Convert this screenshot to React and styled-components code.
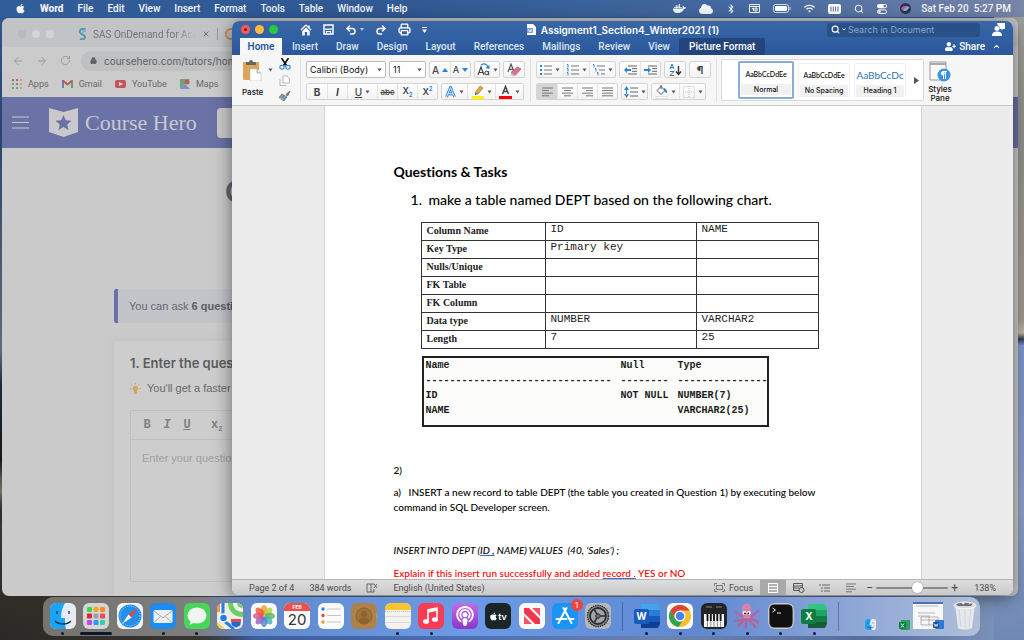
import React from "react";
import styled, { createGlobalStyle, css } from "styled-components";
import { FaApple, FaDocker, FaCloud, FaBluetoothB, FaWifi, FaPodcast, FaUserPlus } from "react-icons/fa";
import { Search, Undo2, Redo2, Printer, ArrowLeft, ArrowRight, RotateCw, Lock, X, ChevronUp } from "lucide-react";

const ui = `Inter, "Liberation Sans", sans-serif`;
const chrome = `Roboto, "Liberation Sans", sans-serif`;
const web = `"Liberation Sans", sans-serif`;
const calibri = `Lato, "Liberation Sans", sans-serif`;

const Global = createGlobalStyle`
  * { box-sizing: border-box; }
  body { margin: 0; font-family: ${ui}; }
  button, input, select, textarea { font: inherit; color: inherit; margin: 0; padding: 0; border: 0; background: none; outline: none; }
  p, h1, h2, h3 { margin: 0; }
  a { color: inherit; text-decoration: none; }
  svg { display: block; flex: none; }
`;

/* ---------- desktop ---------- */
const Desktop = styled.div`
  position: relative;
  height: 100vh;
  overflow: hidden;
  background:
    radial-gradient(ellipse at 0% 100%, #2b2926 0, #39352f 180px, transparent 260px),
    linear-gradient(#a3a19c 0, #8f8e8c 20%, #a09a90 50%, #c0b7a8 52%, #313c58 53%, #7c96cd 54%, #8197c5 64%, #8aa0c8 80%, #6f88b4 100%) right / 30px 100% no-repeat,
    linear-gradient(90deg, #2c2b2a 0, #383530 18%, #3d5e9c 24%, #4c6fb0 45%, #6b82ae 65%, #566e9e 85%, #8298bd 100%) bottom / 100% 60px no-repeat,
    linear-gradient(#30599b 0, #29446f 20%, #5f6a75 55%, #1d2a38 60%, #141a1e 72%, #8b8577 77%, #1b1f20 80%);
`;

const MenuBar = styled.nav`
  display: flex;
  align-items: center;
  gap: 14px;
  height: 17px;
  padding: 0 13px 0 15px;
  background: linear-gradient(90deg, #315d99, #315994 40%, #476ba2 75%, #7886a8);
  color: #f3f6fa;
  font: 500 10px/16px ${chrome};
`;
const MenuItem = styled.button`
  font-weight: ${(p) => (p.$strong ? 800 : 500)};
`;
const StatusTray = styled.div`
  display: flex;
  align-items: center;
  gap: 13px;
  margin-left: auto;
`;
const Clock = styled.time`
  margin-left: -3px;
  white-space: pre;
`;

/* ---------- browser window ---------- */
const BrowserWindow = styled.section`
  position: absolute;
  inset: 18px 6px 44px 2px;
  display: flex;
  flex-direction: column;
  overflow: hidden;
  border-radius: 7px;
  background: #cacaca;
  color: #66686b;
`;
const TabStrip = styled.div`
  display: flex;
  align-items: center;
  height: 29px;
  padding: 3px 0 0 16px;
  background: #c1c3c4;
  font: 10px ${chrome};
`;
const Lights = styled.div`
  display: flex;
  gap: ${(p) => p.$gap}px;
`;
const Light = styled.button`
  display: grid;
  place-items: center;
  width: ${(p) => p.$size}px;
  height: ${(p) => p.$size}px;
  border-radius: 50%;
  background: ${(p) => p.$color};
  &::after {
    content: "";
    width: 3px;
    height: 3px;
    border-radius: 50%;
    background: ${(p) => (p.$edited ? "#7d1210" : "transparent")};
  }
`;
const BrowserTab = styled.div`
  display: flex;
  align-items: center;
  gap: 6px;
  width: 140px;
  margin-left: 24px;
  border-right: 1px solid #96989a;
`;
const TabTitle = styled.span`
  flex: none;
  width: 103px;
  white-space: nowrap;
  color: #727476;
  mask-image: linear-gradient(90deg, #000 80%, transparent);
`;
const OrangeMark = styled.span`
  width: 12px;
  height: 12px;
  margin-left: 7px;
  border: 2px solid #c98755;
  border-radius: 50%;
`;
const AddressRow = styled.form`
  display: flex;
  align-items: center;
  gap: 12px;
  height: 27px;
  padding: 0 10px;
  background: #cbcbcb;
  color: #97999b;
`;
const AddressField = styled.label`
  display: flex;
  flex: 1;
  align-items: center;
  gap: 7px;
  height: 20px;
  margin-left: -2px;
  padding-left: 9px;
  border-radius: 10px;
  background: #bec0c1;
  color: #606263;
  input { flex: 1; font: 10px ${ui}; }
`;
const Bookmarks = styled.div`
  display: flex;
  align-items: center;
  gap: 13px;
  height: 23px;
  padding: 0 10px 4px;
  background: #cbcbcb;
  font: 9px ${chrome};
`;
const Bookmark = styled.a`
  display: flex;
  align-items: center;
  gap: 6px;
`;
const HeroBar = styled.header`
  display: flex;
  align-items: center;
  gap: 20px;
  height: 51px;
  padding: 0 11px 0 10px;
  background: #6a72a6;
  color: #c9c9ce;
`;
const Logo = styled.a`
  display: flex;
  align-items: center;
  gap: 7px;
  font: 22px "Liberation Serif", serif;
`;
const HeroSearch = styled.input`
  flex: 1;
  height: 30px;
  border-radius: 4px;
  background: #c9c9cb;
`;
const HeroPage = styled.main`
  display: flex;
  flex: 1;
  flex-direction: column;
  min-height: 0;
  padding: 27px 112px 0;
  font-family: ${web};
`;
const HeroTitle = styled.h1`
  height: 34px;
  padding-left: 111px;
  color: #66666a;
  font: 700 28px/34px ${ui};
`;
const Notice = styled.p`
  height: 34px;
  margin-top: 80px;
  padding-left: 11px;
  border-left: 4px solid #6971a8;
  border-radius: 2px;
  background: #c2c4c9;
  font-size: 11px;
  line-height: 34px;
  b { font-weight: 700; color: #5d5f63; }
`;
const QuestionCard = styled.div`
  display: flex;
  flex: 1;
  flex-direction: column;
  margin-top: 18px;
  padding: 12px 16px 14px;
  background: #cdcdcd;
  box-shadow: 0 0 6px #bebebe;
`;
const CardTitle = styled.h2`
  color: #5b5c5e;
  font: 600 13px/20px ${ui};
`;
const Tip = styled.p`
  display: flex;
  align-items: center;
  gap: 6px;
  height: 30px;
  font-size: 11px;
`;
const Editor = styled.div`
  display: flex;
  flex: 1;
  flex-direction: column;
  margin-top: 7px;
  border: 1px solid #c0c0c0;
  textarea {
    flex: 1;
    padding: 12px 11px;
    resize: none;
    font-size: 11px;
    &::placeholder { color: #9fa0a1; opacity: 1; }
  }
`;
const EditorTools = styled.div`
  display: flex;
  gap: 12px;
  height: 29px;
  padding: 0 12px;
  border-bottom: 1px solid #c0c0c0;
  color: #808182;
  font: 12px/28px "Liberation Mono", monospace;
  button { min-width: 8px; font-weight: 700; }
  button:last-child { margin-left: 8px; }
  sub { font-size: 7px; }
`;

/* ---------- word window ---------- */
const WordWindow = styled.section`
  position: absolute;
  inset: 21px 11px 45px 232px;
  display: flex;
  flex-direction: column;
  overflow: hidden;
  border-radius: 7px;
  background: #ebebeb;
`;
const WordShadow = styled.div`
  position: absolute;
  inset: 21px 11px 45px 232px;
  border-radius: 7px;
  box-shadow: 0 3px 18px rgba(0, 0, 0, 0.5);
`;
const TitleBar = styled.header`
  display: grid;
  grid-template-columns: 1fr auto 1fr;
  align-items: center;
  height: 17px;
  padding: 0 8px 0 9px;
  background: linear-gradient(#3a66a6, #3160a3);
  color: #fff;
`;
const QuickTools = styled.div`
  display: flex;
  align-items: center;
  gap: 11px;
  button { display: flex; align-items: center; gap: 3px; }
`;
const TitleLeft = styled.div`
  display: flex;
  align-items: center;
  gap: 22px;
`;
const TitleRight = styled.div`
  display: flex;
  align-items: center;
  justify-content: flex-end;
  gap: 12px;
`;
const DocTitle = styled.h1`
  display: flex;
  align-items: center;
  gap: 5px;
  font-size: 10px;
  font-weight: 600;
  line-height: 16px;
`;
const SearchField = styled.label`
  display: flex;
  align-items: center;
  gap: 2px;
  width: 153px;
  height: 14px;
  padding-left: 4px;
  border-radius: 3px;
  background: #2a5089;
  input { width: 120px; font-size: 9px; }
  input::placeholder { color: #8aa4cb; opacity: 1; }
`;
const TabsRow = styled.div`
  display: flex;
  align-items: center;
  height: 17px;
  padding: 0 12px 0 8px;
  background: linear-gradient(#3160a3, #2b579a);
  color: #dbe5f3;
  font: 500 10px ${chrome};
`;
const RibbonTab = styled.button`
  height: 17px;
  padding: 0 9px;
  ${(p) => p.$active && css`width: 42px; margin-right: 1px; padding: 0; background: #f7f7f7; color: #2b579a; font-weight: 600;`}
  ${(p) => p.$context && css`padding: 0 10px; border-radius: 2px 2px 0 0; background: #23457c; color: #fff;`}
`;
const Share = styled.button`
  display: flex;
  align-items: center;
  gap: 3px;
  margin: 0 7px 0 auto;
  color: #fff;
`;
const Ribbon = styled.div`
  display: flex;
  height: 51px;
  background: #f6f6f6;
  border-bottom: 1px solid #c8c8c8;
  color: #111;
`;
const RibbonGroup = styled.div`
  display: flex;
  flex-direction: column;
  gap: 5px;
  margin: 3px 0;
  padding: 3px 5px 0;
  border-right: 1px solid #dfdfdf;
`;
const ClipboardGroup = styled.div`
  display: flex;
  gap: 6px;
  width: 69px;
  margin: 3px 0;
  padding: 0 0 0 10px;
  border-right: 1px solid #dfdfdf;
`;
const PasteButton = styled.button`
  display: grid;
  grid-template-columns: auto auto;
  align-items: center;
  justify-items: center;
  gap: 3px 5px;
  height: 40px;
  font-size: 8px;
  font-weight: 500;
  line-height: 10px;
`;
const SmallStack = styled.div`
  display: flex;
  flex-direction: column;
  gap: 5px;
`;
const ToolRow = styled.div`
  display: flex;
  gap: 3px;
`;
const ButtonGroup = styled.div`
  display: flex;
  height: 17px;
  border: 1px solid #d4d4d4;
  border-radius: 2px;
  background: linear-gradient(#fff, #f3f3f3);
`;
const ToolButton = styled.button`
  display: flex;
  align-items: center;
  justify-content: center;
  gap: 3px;
  width: ${(p) => p.$w || 20}px;
  color: #444;
  font: ${(p) => p.$font || "700 10px"} ${ui};
  background: ${(p) => (p.$on ? "#d5d5d5" : "transparent")};
  & + & { border-left: 1px solid #e4e4e4; }
  sub, sup { color: #2b83d4; font-size: 6px; line-height: 6px; }
`;
const Combo = styled.div`
  display: flex;
  align-items: center;
  width: ${(p) => p.$w}px;
  height: 17px;
  padding: 0 3px;
  border: 1px solid #bdbdbd;
  border-radius: 2px;
  background: #fff;
  select { flex: 1; min-width: 0; appearance: none; font-size: 9px; line-height: 14px; }
`;
const Gallery = styled.div`
  display: flex;
  align-items: center;
  gap: 4px;
  height: 42px;
  margin: 4px 0 0 4px;
  padding: 0 4px 0 16px;
  border: 1px solid #dadada;
  border-radius: 2px;
  background: #fff;
`;
const StyleCard = styled.button`
  display: flex;
  flex-direction: column;
  width: ${(p) => (p.$on ? 56 : 52)}px;
  height: ${(p) => (p.$on ? 38 : 34)}px;
  padding: 1px;
  border: ${(p) => (p.$on ? "2px solid #8aaedb" : "1px solid #efefef")};
  border-radius: 2px;
`;
const StyleSample = styled.span`
  width: 100%;
  height: 20px;
  color: ${(p) => (p.$heading ? "#2e74b5" : "#000")};
  font: ${(p) => (p.$heading ? "10px" : "500 7px")}/20px ${calibri};
  white-space: nowrap;
`;
const StyleName = styled.span`
  width: 100%;
  background: #f1f1f1;
  font-size: 7px;
  font-weight: 500;
  line-height: 11px;
`;
const StylesPane = styled.button`
  display: flex;
  flex-direction: column;
  align-items: center;
  gap: 2px;
  width: 32px;
  padding-top: 6px;
  font-size: 8px;
  font-weight: 500;
  line-height: 9px;
`;

/* ---------- document ---------- */
const Canvas = styled.div`
  flex: 1;
  min-height: 0;
  overflow: hidden;
`;
const Page = styled.article`
  max-width: 598px;
  height: 100%;
  margin: 0 auto;
  padding: 56px 70px 0 69px;
  border: solid #d4d4d4;
  border-width: 0 1px;
  background: #fff;
  color: #000;
  font: 500 10px/15px ${calibri};
  font-variant-ligatures: none;
  overflow: hidden;
`;
const Heading = styled.h2`
  font-size: 14px;
  font-weight: 700;
  line-height: 20px;
`;
const Task = styled.ol`
  margin: 8px 0 12px;
  padding-left: 32px;
  font-size: 14px;
  line-height: 20px;
  white-space: nowrap;
  li { padding-left: 3px; }
`;
const ChartTable = styled.table`
  width: 398px;
  margin-left: 27px;
  border-collapse: collapse;
  table-layout: fixed;
  color: #222;
  th, td { height: 18px; padding: 0 5px; border: 1px solid #333; text-align: left; vertical-align: top; }
  th { width: 124px; font: 700 10px/15px "Liberation Serif", serif; }
  td { font: 11px/13px "Liberation Mono", monospace; }
  td:last-child { width: 122px; }
`;
const DescribeBox = styled.div`
  width: 347px;
  height: 71px;
  margin: 7px 0 36px 28px;
  border: 2px solid #222;
  background: #fcfcfa;
`;
const DescribeTable = styled.table`
  width: 100%;
  border-spacing: 0;
  table-layout: fixed;
  color: #1c1c1c;
  font: 700 10px/15px "Liberation Mono", monospace;
  th, td { height: 15px; padding: 0 0 0 2px; text-align: left; white-space: nowrap; }
  th:first-child { width: 195px; }
  th:nth-child(2) { width: 57px; }
`;
const Para = styled.p`
  margin-top: ${(p) => p.$gap || 0}px;
  color: ${(p) => (p.$red ? "#f00" : "#000")};
  font-style: ${(p) => (p.$italic ? "italic" : "normal")};
  white-space: pre-wrap;
  u { text-decoration-color: #3a66d0; text-underline-offset: 1px; }
`;

const StatusBar = styled.footer`
  display: flex;
  align-items: center;
  gap: 15px;
  height: 16px;
  padding: 0 17px;
  border-top: 1px solid #b5b5b5;
  background: linear-gradient(#dedede, #c9c9c9);
  color: #4c4c4c;
  font: 9px ${chrome};
`;
const ViewTools = styled.div`
  display: flex;
  align-items: center;
  margin-left: auto;
`;
const FocusButton = styled.button`
  display: flex;
  align-items: center;
  gap: 4px;
  margin-right: 7px;
`;
const ViewButton = styled.button`
  display: grid;
  place-items: center;
  width: 26px;
  height: 15px;
  background: ${(p) => (p.$on ? "#a9a9a9" : "transparent")};
`;
const Zoom = styled.div`
  display: flex;
  align-items: center;
  gap: 2px;
  margin-left: -14px;
  button { width: 9px; font-size: 12px; line-height: 12px; }
  input { width: 72px; height: 13px; appearance: none; }
  input::-webkit-slider-runnable-track { height: 2px; background: #8b8b8b; border-radius: 1px; }
  input::-webkit-slider-thumb { appearance: none; width: 11px; height: 11px; margin-top: -5px; border-radius: 50%; background: #fff; box-shadow: 0 0 1px #555; }
`;

/* ---------- dock ---------- */
const Dock = styled.nav`
  position: absolute;
  right: 44px;
  bottom: 4px;
  left: 43px;
  display: flex;
  height: 39px;
  padding-left: 3px;
  border-radius: 10px;
  background: linear-gradient(90deg, #77746d 0, #7d7e82 17%, #6189ca 22%, #6c9ae6 45%, #5f88d2 70%, #8ba4d6 85%, #b0bfd9 100%);
`;
const DockGroup = styled.div`
  display: flex;
  flex: ${(p) => p.$count};
`;
const DockRule = styled.span`
  width: 1px;
  margin: 5px 7px;
  background: rgba(45, 70, 120, 0.5);
`;
const DockSlot = styled.button`
  position: relative;
  display: flex;
  flex: 1;
  flex-direction: column;
  align-items: center;
  padding-top: 6px;
  &::after {
    content: "";
    width: ${(p) => (p.$wide ? 32 : 3)}px;
    height: 3px;
    margin-top: 3px;
    border-radius: 2px;
    background: ${(p) => (p.$running || p.$wide ? "#0b1730" : "transparent")};
  }
`;
const DockTile = styled.span`
  display: grid;
  place-items: center;
  width: 26px;
  height: 26px;
  overflow: hidden;
  border-radius: 6px;
  background: ${(p) => p.$bg || "transparent"};
  color: #fff;
  > * { grid-area: 1 / 1; }
`;
const TvLabel = styled.span`
  display: flex;
  align-items: center;
  font-size: 9px;
  font-weight: 600;
`;
const CalendarFace = styled.span`
  display: flex;
  flex-direction: column;
  align-self: stretch;
  width: 26px;
  color: #333;
  font-size: 15px;
  line-height: 18px;
  text-align: center;
  small { background: #ed514c; color: #fff; font-size: 5px; font-weight: 700; line-height: 8px; }
`;
const Badge = styled.span`
  position: absolute;
  top: 2px;
  right: -1px;
  width: 12px;
  height: 12px;
  border-radius: 50%;
  background: #ee4540;
  color: #fff;
  font-size: 8px;
  line-height: 12px;
`;
const LetterBlock = styled.span`
  width: 15px;
  height: 15px;
  align-self: center;
  justify-self: start;
  border-radius: 2px;
  background: ${(p) => p.$bg};
  font-size: 10px;
  font-weight: 700;
  line-height: 15px;
  text-align: center;
`;
const MiniSlot = styled.span`
  display: flex;
  flex: 1;
  align-items: flex-end;
  justify-content: flex-end;
  padding: 0 3px 6px 0;
`;

/* ---------- icons ---------- */
const Caret = () => (
  <svg width="5" height="4" viewBox="0 0 5 4"><path d="M.5 .5h4L2.500 3.500z" fill="#555" /></svg>
);
const Tri = ({ up }) => (
  <svg width="6" height="4" viewBox="0 0 6 4"><path d={up ? "M0 4h6L3 0z" : "M0 0h6L3 4z"} fill="#2b83d4" /></svg>
);
const HomeIcon = () => (
  <svg width="12" height="12" viewBox="0 0 12 12"><path d="M6 1L1 6M6 1l5 5M9 1.5v3" stroke="#fff" strokeWidth="1.4" fill="none" /><path d="M6 3.5L2.3 7v4.5h2.5V8h2.4v3.5h2.5V7z" fill="#fff" /></svg>
);
const SaveIcon = () => (
  <svg width="11" height="11" viewBox="0 0 11 11"><path d="M1 1h9v9H1z" fill="none" stroke="#fff" strokeWidth="1.5" /><path d="M2 5.2h7M3.5 10V7.5h4V10" fill="none" stroke="#fff" strokeWidth="1.2" /></svg>
);
const CutIcon = () => (
  <svg width="12" height="12" viewBox="0 0 12 12"><path d="M2.500 0l5 7.500M9.500 0l-5 7.500" stroke="#111" strokeWidth="1.600" /><ellipse cx="3" cy="9.300" rx="2.200" ry="1.900" fill="none" stroke="#3a86d0" strokeWidth="1.100" /><ellipse cx="9" cy="9.300" rx="2.200" ry="1.900" fill="none" stroke="#3a86d0" strokeWidth="1.100" /></svg>
);
const Lines = ({ rows = [11, 7, 11, 7], align = 0, color = "#777" }) => (
  <svg width="11" height="10" viewBox="0 0 11 10">
    {rows.map((w, i) => <path key={i} d={`M${(11 - w) * align} ${i * 2.6 + 1}h${w}`} stroke={color} />)}
  </svg>
);
const ListIcon = ({ kind }) => (
  <svg width="12" height="12" viewBox="0 0 12 12">
    {[0, 1, 2].map((i) => {
      const y = 2 + i * 4;
      const inset = kind === "multi" ? i * 2 : 0;
      return (
        <g key={i}>
          {kind === "dot" ? <rect x="0" y={y - 1} width="2" height="2" fill="#2b83d4" /> : <path d={`M${inset} ${y - 1.5}h1v3`} stroke="#2b83d4" fill="none" />}
          <path d={`M${4 + inset} ${y}h${8 - inset}`} stroke="#777" />
        </g>
      );
    })}
  </svg>
);
const IndentIcon = ({ out }) => (
  <svg width="13" height="10" viewBox="0 0 13 10">
    <path d="M4 1h9M8 3.6h5M8 6.3h5M4 9h9" stroke="#666" />
    <path d={out ? "M0 5l3-3v2h4v2H3v2z" : "M7 5L4 2v2H0v2h4v2z"} fill="#2b83d4" />
  </svg>
);
const SortIcon = () => (
  <svg width="14" height="14" viewBox="0 0 14 14">
    <path d="M2 6L4 1l2 5M2.7 4.3h2.6" stroke="#2b83d4" fill="none" />
    <path d="M2 8.5h4l-4 4h4" stroke="#666" fill="none" />
    <path d="M10.5 3v8M8 8.5l2.5 3 2.5-3" stroke="#333" strokeWidth="1.4" fill="none" />
  </svg>
);
const SpacingIcon = () => (
  <svg width="14" height="12" viewBox="0 0 14 12">
    <path d="M6 2h8M6 6h8M6 10h8" stroke="#666" />
    <path d="M2.500 0L5 4H0zM2.500 12L5 8H0zM2 3h1v6H2z" fill="#2b83d4" />
  </svg>
);
const BucketIcon = () => (
  <svg width="13" height="14" viewBox="0 0 13 14">
    <path d="M6 1.500l4 4-4 4-4-4z" fill="#fff" stroke="#555" /><path d="M6 0v4" stroke="#555" /><path d="M9 3c3 1 3 3 3 5-2 0-2-2-3-2.500z" fill="#2b83d4" />
    <path d="M1 11.500h11v2H1z" fill="#fff" stroke="#ccc" strokeWidth=".6" />
  </svg>
);
const BorderIcon = () => (
  <svg width="12" height="12" viewBox="0 0 12 12"><path d="M.5 .5h11v11H.5zM6 0v12M0 6h12" fill="none" stroke="#c4c4c4" strokeDasharray="1 1" /></svg>
);
const MarkerIcon = () => (
  <svg width="12" height="14" viewBox="0 0 12 14">
    <path d="M3 8l5-7 3 2-5 6z" fill="#e2a93b" stroke="#8a6a2c" strokeWidth=".6" /><path d="M3 8l3 1-3 1z" fill="#555" /><path d="M0 11h12v3H0z" fill="#fff200" />
  </svg>
);
const FontColorIcon = () => (
  <svg width="13" height="14" viewBox="0 0 13 14"><path d="M3.500 9L6.500 1.500 9.500 9M4.600 6.500h3.800" stroke="#444" strokeWidth="1.500" fill="none" /><path d="M0 11h13v3H0z" fill="#f00" /></svg>
);
const OutlineAIcon = () => (
  <svg width="11" height="12" viewBox="0 0 11 12"><path d="M1.500 11L5.500 1.500 9.500 11M3 7.800h5" stroke="#2b83d4" strokeWidth="2.800" fill="none" /><path d="M1.500 11L5.500 1.500 9.500 11M3 7.800h5" stroke="#e4f1fd" strokeWidth="1" fill="none" /></svg>
);
const CaseIcon = () => (
  <svg width="13" height="13" viewBox="0 0 13 13">
    <path d="M1 12l3-8 3 8M2 9.500h4" stroke="#444" strokeWidth="1.200" fill="none" /><circle cx="9.600" cy="10" r="1.800" fill="none" stroke="#444" /><path d="M11.700 8v4.300" stroke="#444" />
    <path d="M4 2c3-2 6-1 7 2" stroke="#2b83d4" strokeWidth="1.300" fill="none" /><path d="M12.500 2v4l-4-1z" fill="#2b83d4" />
  </svg>
);
const EraserIcon = () => (
  <svg width="15" height="14" viewBox="0 0 15 14"><path d="M1 9l3-8 3 8M2 6.300h4" stroke="#555" strokeWidth="1.200" fill="none" /><path d="M4 9.500L10.500 4 14 6 8 12.500z" fill="#d9738c" stroke="#a7506a" strokeWidth=".7" /><path d="M4 9.500l4 3-1.500 1L3.500 12z" fill="#f0b5c1" /></svg>
);
const PasteIcon = () => (
  <svg width="19" height="21" viewBox="0 0 19 21">
    <rect x="0" y="2" width="16" height="18" rx="1" fill="#dba656" /><path d="M3 2h3a2 2 0 0 1 4 0h3v3H3z" fill="#666" />
    <path d="M7 9h7l4 4v8H7z" fill="#fff" stroke="#bbb" strokeWidth=".6" /><path d="M14 9v4h4" fill="#e5e5e5" stroke="#999" strokeWidth=".7" />
  </svg>
);
const CopyIcon = () => (
  <svg width="11" height="11" viewBox="0 0 11 11"><path d="M4 1h4l2.500 2.500V8H4z" fill="#fff" stroke="#aaa" strokeWidth=".8" /><path d="M1 4v6.500h6" fill="none" stroke="#aaa" strokeWidth=".8" /></svg>
);
const BrushIcon = () => (
  <svg width="12" height="10" viewBox="0 0 12 10"><path d="M11 0L7 3.500l1.500 1.500z" stroke="#666" fill="#888" /><path d="M3 3l5 3-3 4-5-3.500z" fill="#7699bd" stroke="#667" strokeWidth=".7" /><path d="M1 7l3 2" stroke="#d9a35b" strokeWidth="1.500" /></svg>
);
const DocIcon = () => (
  <svg width="9" height="11" viewBox="0 0 9 11"><path d="M0 0h6l3 3v8H0z" fill="#fff" /><rect x="0" y="4" width="6" height="5" fill="#7fa3d8" /><path d="M1.500 5l1 3 .7-2 .7 2 .8-3" stroke="#fff" strokeWidth=".6" fill="none" /></svg>
);
const PersonIcon = () => (
  <svg width="13" height="13" viewBox="0 0 13 13"><path d="M5 0h8v6h-2L9.500 7.500V6H7z" fill="#fff" /><circle cx="5" cy="5.500" r="2.700" fill="#fff" stroke="#3160a3" strokeWidth=".5" /><path d="M0 13c0-3.500 2-4.500 5-4.500s5 1 5 4.500z" fill="#fff" /></svg>
);
const StylesPaneIcon = () => (
  <svg width="22" height="22" viewBox="0 0 22 22"><path d="M1 1h16v18H1z" fill="#fafafa" stroke="#999" /><path d="M1 3h16" stroke="#aaa" strokeWidth="2" /><circle cx="15" cy="14" r="6.500" fill="#3a92e6" /><path d="M16.500 18v-7.500M14.500 18v-7.500M13 10.500h5" stroke="#fff" fill="none" /><circle cx="13.800" cy="12.300" r="1.900" fill="#fff" /></svg>
);
const ShieldIcon = () => (
  <svg width="29" height="29" viewBox="0 0 29 29"><path d="M0 0l14.500 4L29 0v24l-14.500 5L0 24z" fill="#c9c9cb" /><path d="M14.500 7l2.300 5.200 5.700.5-4.300 3.800 1.300 5.500-5-2.900-5 2.900 1.300-5.500-4.300-3.800 5.700-.5z" fill="#6a72a6" /></svg>
);
const BulbIcon = () => (
  <svg width="11" height="11" viewBox="0 0 11 11"><circle cx="5.500" cy="5.500" r="2.700" fill="#d0a95f" /><path d="M4 7h3v4H4z" fill="#d0a95f" /><path d="M5.500 0v1.500M0 5.500h1.500M9.500 5.500H11M1.500 1.500l1 1M9.500 1.500l-1 1" stroke="#d0a95f" /></svg>
);
const AppsIcon = () => {
  const colors = ["#c4655b", "#c4655b", "#c9a35a", "#6aa57a", "#6b87bd", "#c9a35a", "#6aa57a", "#6aa57a", "#c9a35a"];
  return (
    <svg width="10" height="10" viewBox="0 0 10 10">{colors.map((c, i) => <rect key={i} x={(i % 3) * 4} y={Math.floor(i / 3) * 4} width="2" height="2" fill={c} />)}</svg>
  );
};
const GmailIcon = () => (
  <svg width="11" height="9" viewBox="0 0 11 9"><path d="M1 9V1" stroke="#5f83bd" strokeWidth="2" /><path d="M10 9V1" stroke="#5ca377" strokeWidth="2" /><path d="M.7 1.500l4.800 4 4.800-4" stroke="#c25a52" strokeWidth="2" fill="none" /></svg>
);
const YouTubeIcon = () => (
  <svg width="11" height="8" viewBox="0 0 11 8"><rect width="11" height="8" rx="2" fill="#c4565a" /><path d="M4 2l4 2-4 2z" fill="#ddd" /></svg>
);
const MapsBookmarkIcon = () => (
  <svg width="10" height="10" viewBox="0 0 10 10"><rect width="10" height="10" rx="1" fill="#6ba57c" /><path d="M0 10L10 0v10z" fill="#c2c8cf" /><path d="M0 10l5-5 5 5z" fill="#7693c7" /><circle cx="7" cy="3" r="2.500" fill="#c05a54" /></svg>
);
const SasIcon = () => (
  <svg width="9" height="12" viewBox="0 0 9 12"><path d="M7.500 1C4 0 1 2 2 4.500s5 2 5 4.500-3 3-5 2" stroke="#4a9bb8" strokeWidth="2" fill="none" /><path d="M8 3.500C6 2 4 3 5 5" stroke="#6b8fb0" fill="none" /></svg>
);

/* ---------- dock icons ---------- */
const FinderArt = ({ size = 26 }) => (
  <svg width={size} height={size} viewBox="0 0 26 26"><rect width="26" height="26" rx="5" fill="#e6ebf3" /><path d="M5 0h10c-3 5-4 10-4 15h4c0 4 0 8 1 11H5a5 5 0 0 1-5-5V5a5 5 0 0 1 5-5z" fill="#1ba3f5" /><path d="M7 8v3M19 8v3M5 18c4 4 12 4 16 0" stroke="#1b3148" strokeWidth="1.300" fill="none" /></svg>
);
const LaunchpadArt = () => {
  const colors = ["#37d64b", "#f6a623", "#f78c1f", "#e0262e", "#9aa0a6", "#f4485c", "#c04ae0", "#2b9af3", "#35d0a0"];
  return (
    <svg width="26" height="26" viewBox="0 0 26 26"><rect width="26" height="26" fill="#d6d6d8" />{colors.map((c, i) => <rect key={i} x={4 + (i % 3) * 6.500} y={4 + Math.floor(i / 3) * 6.500} width="5" height="5" rx="1" fill={c} />)}</svg>
  );
};
const SafariArt = () => (
  <svg width="26" height="26" viewBox="0 0 26 26"><rect width="26" height="26" fill="#f4f4f6" /><circle cx="13" cy="13" r="11.500" fill="#2290ea" /><circle cx="13" cy="13" r="10" fill="none" stroke="#cfe6fb" strokeDasharray=".7 1.500" /><path d="M21 5l-6.500 9.500-3-3z" fill="#ee4136" /><path d="M5 21l6.500-9.500 3 3z" fill="#fff" /></svg>
);
const MailArt = () => (
  <svg width="26" height="26" viewBox="0 0 26 26"><rect width="26" height="26" fill="#1d8bf0" /><rect x="3.500" y="7" width="19" height="13" rx="1.500" fill="#eceef0" /><path d="M4 8l9 7 9-7M4 19.500l6.500-6M22 19.500l-6.500-6" stroke="#9aa4ae" strokeWidth=".9" fill="none" /></svg>
);
const MessagesArt = () => (
  <svg width="26" height="26" viewBox="0 0 26 26"><rect width="26" height="26" fill="#48d65a" /><ellipse cx="13" cy="12.500" rx="9.500" ry="8" fill="#f1f5f1" /><path d="M7 17l-1.500 5 6-3z" fill="#f1f5f1" /></svg>
);
const MapsArt = () => (
  <svg width="26" height="26" viewBox="0 0 26 26"><rect width="26" height="26" fill="#efece3" /><path d="M11 0h15v14C17 14 11 8 11 0z" fill="#6bd15e" /><path d="M16 0c0 5 4 9 10 9V0z" fill="#f3f3ef" /><path d="M20 0c0 3 3 5 6 5V0z" fill="#6bd15e" /><path d="M0 0h3v9H0z" fill="#f29a3a" /><path d="M6 0v17M6 17l11 9" stroke="#1f7fe8" strokeWidth="3" /><path d="M0 19l8 7H0z" fill="#f6cf47" /><circle cx="6.500" cy="15" r="4" fill="#1f7fe8" stroke="#fff" strokeWidth="1.400" /><path d="M14 16h10v5c0 2-3 3-5 4-2-1-5-2-5-4z" fill="#2967c9" stroke="#fff" strokeWidth=".7" /><path d="M14 16h10v3H14z" fill="#e5484d" /></svg>
);
const PhotosArt = () => {
  const colors = ["#f59a23", "#b8cf3c", "#5db75b", "#45b3b5", "#4d86d8", "#9264c5", "#d9548f", "#ee5340"];
  return (
    <svg width="26" height="26" viewBox="0 0 26 26"><rect width="26" height="26" fill="#fafafa" />{colors.map((c, i) => <ellipse key={c} cx="13" cy="7.200" rx="3.300" ry="5.200" fill={c} opacity=".82" transform={`rotate(${i * 45} 13 13)`} />)}</svg>
  );
};
const RemindersArt = () => (
  <svg width="26" height="26" viewBox="0 0 26 26"><rect width="26" height="26" fill="#fafafa" />{["#1f83f0", "#e8473e", "#f29a2e"].map((c, i) => <g key={c}><circle cx="5" cy={6 + i * 6.500} r="1.700" fill={c} /><path d={`M9 ${6 + i * 6.500}h14`} stroke="#c5c5c8" /></g>)}</svg>
);
const ContactsArt = () => (
  <svg width="27" height="26" viewBox="0 0 27 26"><path d="M25 4h2v5h-2z" fill="#8b8b8f" /><path d="M25 10h2v5h-2z" fill="#f2a23c" /><path d="M25 16h2v5h-2z" fill="#5cc466" /><rect width="25.500" height="26" rx="5" fill="#ae8148" /><circle cx="13" cy="13" r="8" fill="#a07439" stroke="#8a6330" /><circle cx="13" cy="11" r="3" fill="#8a6330" /><path d="M7.500 18c1-5 10-5 11 0a8 8 0 0 1-11 0z" fill="#8a6330" /></svg>
);
const NotesArt = () => (
  <svg width="26" height="26" viewBox="0 0 26 26"><rect width="26" height="26" fill="#f3f2ee" /><path d="M0 0h26v7H0z" fill="#fbc62c" /><path d="M0 8.500h26" stroke="#c9c4b5" strokeDasharray="1 1" /><path d="M0 13.500h26M0 19.500h26" stroke="#dcdad4" /></svg>
);
const MusicArt = () => (
  <svg width="26" height="26" viewBox="0 0 26 26"><rect width="26" height="26" fill="#f93c55" /><path d="M10 18V7l9-2v11" stroke="#fff" strokeWidth="1.600" fill="none" /><path d="M10 8.500l9-2" stroke="#fff" strokeWidth="2.500" /><ellipse cx="8" cy="18.500" rx="3" ry="2.300" fill="#fff" /><ellipse cx="17" cy="16.500" rx="3" ry="2.300" fill="#fff" /></svg>
);
const NewsArt = () => (
  <svg width="26" height="26" viewBox="0 0 26 26"><rect width="26" height="26" fill="#fafafa" /><path d="M5 5h5l11 11v5h-5L5 10z" fill="#f0364f" /><path d="M5 13v8h8zM13 5h8v8z" fill="#f0364f" opacity=".85" /></svg>
);
const AppStoreArt = () => (
  <svg width="26" height="26" viewBox="0 0 26 26"><rect width="26" height="26" fill="#1b95f3" /><path d="M14.500 5L7.500 18M11.500 5l8 15M4.500 16h10M17.500 16h4M6.500 20l.7-1.200" stroke="#fff" strokeWidth="2" strokeLinecap="round" /></svg>
);
const SettingsArt = () => (
  <svg width="26" height="26" viewBox="0 0 26 26"><rect width="26" height="26" fill="#b5b8bb" /><circle cx="13" cy="13" r="10.500" fill="#8f9295" stroke="#2f3133" strokeWidth="1.500" strokeDasharray="1.500 .7" /><circle cx="13" cy="13" r="8" fill="#a2a5a8" stroke="#2b2d2f" strokeWidth="1.800" /><path d="M13 13l-3.500-6M13 13h7M13 13l-3.500 6" stroke="#2b2d2f" strokeWidth="1.500" /><circle cx="13" cy="13" r="2.200" fill="#77797c" stroke="#222" /></svg>
);
const OfficeArt = ({ shades }) => (
  <svg width="26" height="26" viewBox="0 0 26 26"><path d="M7 1h19v6H7z" fill={shades[0]} /><path d="M7 7h19v6H7z" fill={shades[1]} /><path d="M7 13h19v6H7z" fill={shades[2]} /><path d="M7 19h19v6H7z" fill={shades[3]} /></svg>
);
const ChromeArt = () => (
  <svg width="26" height="26" viewBox="0 0 26 26"><rect width="26" height="26" fill="#f7f7f7" /><circle cx="13" cy="13" r="11" fill="#f6c12d" /><path d="M3.500 7.500a11 11 0 0 1 19 0H13a5.500 5.500 0 0 0-4.800 8.300z" fill="#dc4437" /><path d="M3.500 7.500L8.200 15.800a5.500 5.500 0 0 0 7.500 2L11.500 24A11 11 0 0 1 3.500 7.500z" fill="#34a24f" /><circle cx="13" cy="13" r="5.500" fill="#fff" /><circle cx="13" cy="13" r="4.300" fill="#4384f0" /></svg>
);
const PianoArt = () => (
  <svg width="26" height="26" viewBox="0 0 26 26"><rect width="26" height="26" fill="#242426" /><path d="M5 4h6M15 4h6" stroke="#555" strokeWidth="2" /><path d="M3 11h20v13H3z" fill="#f4f4f4" /><path d="M6.500 11v13M9.800 11v13M13 11v13M16.300 11v13M19.600 11v13" stroke="#555" strokeWidth=".6" /><path d="M6.500 11v7M9.800 11v7M13 11v7M16.300 11v7M19.600 11v7" stroke="#111" strokeWidth="1.800" /></svg>
);
const OctopusArt = () => (
  <svg width="26" height="26" viewBox="0 0 30 29"><path d="M15 15C8 16 5 12 2 10M14 16c-4 5-9 3-13 4M13 17c-2 5-6 5-8 9M15 17c-1 5-2 7-1 11M17 17c2 5 5 6 7 10M18 16c4 4 7 2 10 6M18 15c5 0 6-5 10-6" stroke="#b8609a" strokeWidth="2.600" fill="none" strokeLinecap="round" /><path d="M9 6c0-8 11-8 11 0 0 4-1 6-1 11h-8c0-4-2-7-2-11z" fill="#d382ae" /><circle cx="12" cy="11" r="2.200" fill="#fff" /><circle cx="17" cy="11" r="2.200" fill="#fff" /><circle cx="12.500" cy="11.500" r="1" /><circle cx="16.500" cy="11.500" r="1" /></svg>
);
const TerminalArt = () => (
  <svg width="26" height="26" viewBox="0 0 26 26"><rect x=".7" y=".7" width="24.600" height="24.600" rx="5.500" fill="#111" stroke="#c9c9c9" strokeWidth="1.400" /><path d="M4.500 5l3 2-3 2M9 10h4" stroke="#eee" fill="none" /></svg>
);
const ThumbArt = () => (
  <svg width="31" height="28" viewBox="0 0 31 28"><path d="M0 0h30v27H0z" fill="#f7f7f9" /><path d="M0 1h30" stroke="#4b70b4" strokeWidth="2" /><path d="M3 4h22M5 11h17M5 14h12" stroke="#aaa" strokeWidth=".8" /><path d="M8 15h17v8H8zM8 18h17M16 15v8" stroke="#888" strokeWidth=".6" fill="none" /><rect x="22" y="18" width="9" height="9" rx="1" fill="#2f7bd3" /><rect x="20" y="20" width="6" height="6" rx="1" fill="#1c4f9f" /><path d="M21 21.500l1 3 1-2.500 1 2.500 1-3" stroke="#fff" strokeWidth=".7" fill="none" /></svg>
);
const MiniExcelArt = () => (
  <svg width="11" height="10" viewBox="0 0 11 10"><rect x="2" width="9" height="10" rx="1" fill="#2aa163" /><rect y="2" width="7" height="7" rx="1" fill="#107c41" /><path d="M2 3.500l3 4M5 3.500l-3 4" stroke="#fff" /></svg>
);
const TrashArt = () => (
  <svg width="24" height="29" viewBox="0 0 24 29"><path d="M2 4h20l-3 23c-3 2-11 2-14 0z" fill="#e6e8ea" /><path d="M6 8l2 18M12 8v19M18 8l-2 18" stroke="#d2d5d8" /><ellipse cx="12" cy="4" rx="11" ry="3.300" fill="#d8dadd" /><path d="M3 3l4-2 3 3 3-3 3 2 4-1-2 3H5z" fill="#6b6f78" /><path d="M8 2l2 2M15 1l1 3" stroke="#d36d4a" /><ellipse cx="12" cy="4.500" rx="11" ry="3.300" fill="none" stroke="#f5f6f7" /></svg>
);

const menus = ["File", "Edit", "View", "Insert", "Format", "Tools", "Table", "Window", "Help"];
const ribbonTabs = ["Insert", "Draw", "Design", "Layout", "References", "Mailings", "Review", "View"];
const chart = [
  ["Column Name", "ID", "NAME"],
  ["Key Type", "Primary key", ""],
  ["Nulls/Unique", "", ""],
  ["FK Table", "", ""],
  ["FK Column", "", ""],
  ["Data type", "NUMBER", "VARCHAR2"],
  ["Length", "7", "25"],
];
const dashes = (n) => "-".repeat(n);

const dockApps = [
  { name: "Finder", art: <FinderArt />, running: true },
  { name: "Launchpad", art: <LaunchpadArt />, wide: true },
  { name: "Safari", art: <SafariArt /> },
  { name: "Mail", art: <MailArt />, running: true },
  { name: "Messages", art: <MessagesArt />, running: true },
  { name: "Maps", art: <MapsArt /> },
  { name: "Photos", art: <PhotosArt /> },
  { name: "Calendar", bg: "#fafafa", art: <CalendarFace><small>FEB</small>20</CalendarFace> },
  { name: "Reminders", art: <RemindersArt /> },
  { name: "Contacts", art: <ContactsArt /> },
  { name: "Notes", art: <NotesArt />, running: true },
  { name: "Music", art: <MusicArt />, running: true },
  { name: "Podcasts", bg: "linear-gradient(#c46be8, #8a35c9)", art: <FaPodcast size={20} /> },
  { name: "TV", bg: "#1c2526", art: <TvLabel><FaApple size={9} />tv</TvLabel> },
  { name: "News", art: <NewsArt /> },
  { name: "App Store", art: <AppStoreArt />, badge: "1" },
  { name: "System Preferences", art: <SettingsArt /> },
];
const openApps = [
  { name: "Word", running: true, art: <><OfficeArt shades={["#41a5ee", "#2b7cd3", "#185abd", "#103f91"]} /><LetterBlock $bg="#185abd">W</LetterBlock></> },
  { name: "Chrome", running: true, art: <ChromeArt /> },
  { name: "Piano", running: true, art: <PianoArt /> },
  { name: "Octopus", running: true, art: <OctopusArt /> },
  { name: "Terminal", running: true, art: <TerminalArt /> },
  { name: "Excel", running: true, art: <><OfficeArt shades={["#33c481", "#21a366", "#107c41", "#185c37"]} /><LetterBlock $bg="#107c41">X</LetterBlock></> },
];

const DockApp = ({ app }) => (
  <DockSlot aria-label={app.name} $running={app.running} $wide={app.wide}>
    <DockTile $bg={app.bg}>{app.art}</DockTile>
    {app.badge && <Badge>{app.badge}</Badge>}
  </DockSlot>
);

const Browser = () => (
  <BrowserWindow>
    <TabStrip>
      <Lights $gap={6}>
        <Light $size={8} $color="#b8b9ba" aria-label="Close" />
        <Light $size={8} $color="#d3d4d4" aria-label="Minimize" />
        <Light $size={8} $color="#d3d4d4" aria-label="Zoom" />
      </Lights>
      <BrowserTab><SasIcon /><TabTitle>SAS OnDemand for Acad</TabTitle><X size={8} strokeWidth={3} /></BrowserTab>
      <OrangeMark />
    </TabStrip>
    <AddressRow>
      <ArrowLeft size={12} /><ArrowRight size={12} /><RotateCw size={11} />
      <AddressField><Lock size={7} fill="#606263" strokeWidth={3} /><input aria-label="Address" defaultValue="coursehero.com/tutors/homework-help" /></AddressField>
    </AddressRow>
    <Bookmarks>
      <Bookmark href="#apps"><AppsIcon />Apps</Bookmark>
      <Bookmark href="#gmail"><GmailIcon />Gmail</Bookmark>
      <Bookmark href="#youtube"><YouTubeIcon />YouTube</Bookmark>
      <Bookmark href="#maps"><MapsBookmarkIcon />Maps</Bookmark>
    </Bookmarks>
    <HeroBar>
      <svg width="17" height="13" viewBox="0 0 17 13"><path d="M0 1h17M0 6.500h17M0 12h17" stroke="#c9c9ce" /></svg>
      <Logo href="#home"><ShieldIcon />Course Hero</Logo>
      <HeroSearch aria-label="Search Course Hero" />
    </HeroBar>
    <HeroPage>
      <HeroTitle>Questions</HeroTitle>
      <Notice>You can ask <b>6 questions</b></Notice>
      <QuestionCard>
        <CardTitle>1. Enter the question</CardTitle>
        <Tip><BulbIcon />You'll get a faster answer</Tip>
        <Editor>
          <EditorTools>
            <button>B</button><button><i>I</i></button><button><u>U</u></button><button>x<sub>2</sub></button>
          </EditorTools>
          <textarea aria-label="Question" placeholder="Enter your question" />
        </Editor>
      </QuestionCard>
    </HeroPage>
  </BrowserWindow>
);

const WordRibbon = () => (
  <Ribbon>
    <ClipboardGroup>
      <PasteButton><PasteIcon /><Caret /><span>Paste</span></PasteButton>
      <SmallStack>
        <CutIcon /><CopyIcon /><BrushIcon />
      </SmallStack>
    </ClipboardGroup>
    <RibbonGroup>
      <ToolRow>
        <Combo $w={80}><select aria-label="Font"><option>Calibri (Body)</option></select><Caret /></Combo>
        <Combo $w={37}><select aria-label="Font size"><option>11</option></select><Caret /></Combo>
        <ButtonGroup><ToolButton $font="500 10px">A<Tri up /></ToolButton><ToolButton $font="500 9px">A<Tri /></ToolButton></ButtonGroup>
        <ButtonGroup><ToolButton $w={24} aria-label="Change case"><CaseIcon /><Caret /></ToolButton></ButtonGroup>
        <ButtonGroup><ToolButton aria-label="Clear formatting"><EraserIcon /></ToolButton></ButtonGroup>
      </ToolRow>
      <ToolRow>
        <ButtonGroup>
          <ToolButton>B</ToolButton><ToolButton><i>I</i></ToolButton><ToolButton $w={30} $font="500 10px"><u>U</u><Caret /></ToolButton>
          <ToolButton $font="500 8px"><s>abc</s></ToolButton><ToolButton $font="600 9px"><span>X<sub>2</sub></span></ToolButton><ToolButton $font="600 9px"><span>X<sup>2</sup></span></ToolButton>
        </ButtonGroup>
        <ButtonGroup>
          <ToolButton $w={25} aria-label="Text effects"><OutlineAIcon /><Caret /></ToolButton>
          <ToolButton $w={28} aria-label="Highlight"><MarkerIcon /><Caret /></ToolButton>
          <ToolButton $w={28} aria-label="Font color"><FontColorIcon /><Caret /></ToolButton>
        </ButtonGroup>
      </ToolRow>
    </RibbonGroup>
    <RibbonGroup>
      <ToolRow>
        <ButtonGroup>
          {["dot", "num", "multi"].map((k) => <ToolButton key={k} $w={26} aria-label={`List ${k}`}><ListIcon kind={k} /><Caret /></ToolButton>)}
        </ButtonGroup>
        <ButtonGroup><ToolButton aria-label="Outdent"><IndentIcon out /></ToolButton><ToolButton aria-label="Indent"><IndentIcon /></ToolButton></ButtonGroup>
        <ButtonGroup><ToolButton aria-label="Sort"><SortIcon /></ToolButton></ButtonGroup>
        <ButtonGroup><ToolButton $font="700 11px">¶</ToolButton></ButtonGroup>
      </ToolRow>
      <ToolRow>
        <ButtonGroup>
          <ToolButton $on aria-label="Align left"><Lines /></ToolButton>
          <ToolButton aria-label="Center"><Lines align={0.5} /></ToolButton>
          <ToolButton aria-label="Align right"><Lines align={1} /></ToolButton>
          <ToolButton aria-label="Justify"><Lines rows={[11, 11, 11, 11]} /></ToolButton>
        </ButtonGroup>
        <ButtonGroup><ToolButton $w={25} aria-label="Line spacing"><SpacingIcon /><Caret /></ToolButton></ButtonGroup>
        <ButtonGroup>
          <ToolButton $w={27} aria-label="Shading"><BucketIcon /><Caret /></ToolButton>
          <ToolButton $w={26} aria-label="Borders"><BorderIcon /><Caret /></ToolButton>
        </ButtonGroup>
      </ToolRow>
    </RibbonGroup>
    <Gallery>
      <StyleCard $on><StyleSample>AaBbCcDdEe</StyleSample><StyleName>Normal</StyleName></StyleCard>
      <StyleCard><StyleSample>AaBbCcDdEe</StyleSample><StyleName>No Spacing</StyleName></StyleCard>
      <StyleCard><StyleSample $heading>AaBbCcDc</StyleSample><StyleName>Heading 1</StyleName></StyleCard>
      <svg width="9" height="7" viewBox="0 0 9 7"><path d="M4 0l5 3.500-5 3.500z" fill="#555" /></svg>
    </Gallery>
    <StylesPane><StylesPaneIcon /><span>Styles<br />Pane</span></StylesPane>
  </Ribbon>
);

const Word = () => (
  <WordWindow>
    <TitleBar>
      <TitleLeft>
        <Lights $gap={5}>
          <Light $size={9} $color="#fc5b57" $edited aria-label="Close" />
          <Light $size={9} $color="#fdbc40" aria-label="Minimize" />
          <Light $size={9} $color="#28c840" aria-label="Zoom" />
        </Lights>
        <QuickTools>
          <button aria-label="Home"><HomeIcon /></button>
          <button aria-label="Save"><SaveIcon /></button>
          <button aria-label="Undo"><Undo2 size={12} strokeWidth={3} /><svg width="4" height="3" viewBox="0 0 4 3"><path d="M0 0h4L2 3z" fill="#b9cbe6" /></svg></button>
          <button aria-label="Redo"><Redo2 size={12} strokeWidth={3} /></button>
          <button aria-label="Print"><Printer size={13} strokeWidth={2.5} /></button>
          <button aria-label="Customize"><svg width="5" height="6" viewBox="0 0 5 6"><path d="M0 .5h5" stroke="#fff" /><path d="M0 2.500h5L2.500 6z" fill="#fff" /></svg></button>
        </QuickTools>
      </TitleLeft>
      <DocTitle><DocIcon />Assigment1_Section4_Winter2021 (1)</DocTitle>
      <TitleRight>
        <SearchField><Search size={9} strokeWidth={3} /><svg width="4" height="3" viewBox="0 0 4 3"><path d="M.5 .5L2 2 3.500 .5" stroke="#fff" fill="none" /></svg><input type="search" aria-label="Search in Document" placeholder="Search in Document" /></SearchField>
        <PersonIcon />
      </TitleRight>
    </TitleBar>
    <TabsRow>
      <RibbonTab $active>Home</RibbonTab>
      {ribbonTabs.map((t) => <RibbonTab key={t}>{t}</RibbonTab>)}
      <RibbonTab $context>Picture Format</RibbonTab>
      <Share><FaUserPlus size={11} />Share</Share>
      <ChevronUp size={9} strokeWidth={3} />
    </TabsRow>
    <WordRibbon />
    <Canvas>
      <Page>
        <Heading>Questions &amp; Tasks</Heading>
        <Task><li>make a table named DEPT based on the following chart.</li></Task>
        <ChartTable>
          <tbody>
            {chart.map(([head, a, b]) => <tr key={head}><th scope="row">{head}</th><td>{a}</td><td>{b}</td></tr>)}
          </tbody>
        </ChartTable>
        <DescribeBox>
          <DescribeTable>
            <thead><tr><th>Name</th><th>Null</th><th>Type</th></tr></thead>
            <tbody>
              <tr><td>{dashes(31)}</td><td>{dashes(8)}</td><td>{dashes(15)}</td></tr>
              <tr><td>ID</td><td>NOT NULL</td><td>NUMBER(7)</td></tr>
              <tr><td>NAME</td><td /><td>VARCHAR2(25)</td></tr>
            </tbody>
          </DescribeTable>
        </DescribeBox>
        <Para>2)</Para>
        <Para $gap={7}>a)   INSERT a new record to table DEPT (the table you created in Question 1) by executing below command in SQL Developer screen.</Para>
        <Para $gap={28} $italic>INSERT INTO DEPT (<u>ID ,</u> NAME) VALUES  (40, ‘Sales’) ;</Para>
        <Para $gap={8} $red>Explain if this insert run successfully and added <u>record .</u> YES or NO</Para>
      </Page>
    </Canvas>
    <StatusBar>
      <span>Page 2 of 4</span>
      <span>384 words</span>
      <svg width="12" height="10" viewBox="0 0 12 10"><path d="M1 1h4v8H1zM5 1h3M5 9h3M8 6v3M8 1l3 4M11 1L8 5" fill="none" stroke="#666" /></svg>
      <span>English (United States)</span>
      <ViewTools>
        <FocusButton><svg width="11" height="9" viewBox="0 0 11 9"><path d="M.5 3V.5H3M8 .5h2.500V3M10.500 6v2.500H8M3 8.500H.5V6M2.500 2.500h6v4h-6z" fill="none" stroke="#777" /></svg>Focus</FocusButton>
        <ViewButton $on aria-label="Print layout"><svg width="10" height="10" viewBox="0 0 10 10"><rect width="10" height="10" fill="#fff" /><path d="M1 2h8M1 5h8M1 8h8" stroke="#666" /></svg></ViewButton>
        <ViewButton aria-label="Web layout"><svg width="12" height="10" viewBox="0 0 12 10"><path d="M.5 .5h9v7h-9zM1 3h8M1 5h5" fill="none" stroke="#555" /><circle cx="8.500" cy="7" r="2.500" fill="#ccc" stroke="#555" /></svg></ViewButton>
        <ViewButton aria-label="Outline"><svg width="12" height="8" viewBox="0 0 12 8"><path d="M0 1h2M3 1h8M2 4h2M5 4h6M2 7h2M5 7h6" stroke="#666" /></svg></ViewButton>
        <ViewButton aria-label="Draft"><Lines rows={[10, 8, 10, 6]} /></ViewButton>
      </ViewTools>
      <Zoom>
        <button aria-label="Zoom out">−</button>
        <input type="range" aria-label="Zoom" min="0" max="100" defaultValue="58" />
        <button aria-label="Zoom in">+</button>
      </Zoom>
      <span>138%</span>
    </StatusBar>
  </WordWindow>
);

export default function App() {
  return (
    <Desktop>
      <Global />
      <MenuBar>
        <FaApple size={11} />
        <MenuItem $strong>Word</MenuItem>
        {menus.map((m) => <MenuItem key={m}>{m}</MenuItem>)}
        <StatusTray>
          <FaDocker size={13} />
          <FaCloud size={14} />
          <FaBluetoothB size={10} />
          <svg width="11" height="9" viewBox="0 0 11 9"><path d="M.5 .5h10v8H.5zM0 2.500h11M3 5l1.500-1v3M6 4h2v3H6z" fill="none" stroke="#fff" /></svg>
          <svg width="18" height="9" viewBox="0 0 18 9"><rect x=".5" y=".5" width="15" height="8" rx="2" fill="none" stroke="#d5deec" /><rect x="2" y="2" width="12" height="5" rx="1" fill="#fff" /><path d="M17 3v3" stroke="#d5deec" /></svg>
          <FaWifi size={11} />
          <svg width="13" height="10" viewBox="0 0 13 10"><rect width="13" height="10" rx="2" fill="#fff" /><path d="M3 2.500v5M5.300 2.500v5M7.600 2.500v5M10 2.500v5" stroke="#54719f" /></svg>
          <Search size={10} strokeWidth={2.500} />
          <svg width="10" height="10" viewBox="0 0 10 10"><rect width="10" height="4.300" rx="2.100" fill="#fff" /><circle cx="7.700" cy="2.100" r="1.300" fill="#54719f" /><rect x=".5" y="5.800" width="9" height="3.700" rx="1.800" fill="none" stroke="#fff" /><circle cx="2.500" cy="7.600" r="1.300" fill="#fff" /></svg>
          <svg width="11" height="11" viewBox="0 0 11 11"><circle cx="5.500" cy="5.500" r="5.500" fill="#30304f" /><path d="M1 6c2-4 6-4 9-1-3 0-5 4-9 1z" fill="#d650a0" /><path d="M2 7c3 0 4-4 7-3-1 4-4 5-7 3z" fill="#4fd0e0" /></svg>
          <Clock>Sat Feb 20  5:27 PM</Clock>
        </StatusTray>
      </MenuBar>
      <Browser />
      <WordShadow />
      <Word />
      <Dock>
        <DockGroup $count={17}>{dockApps.map((a) => <DockApp key={a.name} app={a} />)}</DockGroup>
        <DockRule />
        <DockGroup $count={6}>{openApps.map((a) => <DockApp key={a.name} app={a} />)}</DockGroup>
        <DockRule />
        <DockGroup $count={4}>
          <MiniSlot><FinderArt size={11} /></MiniSlot>
          <MiniSlot><MiniExcelArt /></MiniSlot>
          <MiniSlot><ThumbArt /></MiniSlot>
          <MiniSlot><TrashArt /></MiniSlot>
        </DockGroup>
      </Dock>
    </Desktop>
  );
}
